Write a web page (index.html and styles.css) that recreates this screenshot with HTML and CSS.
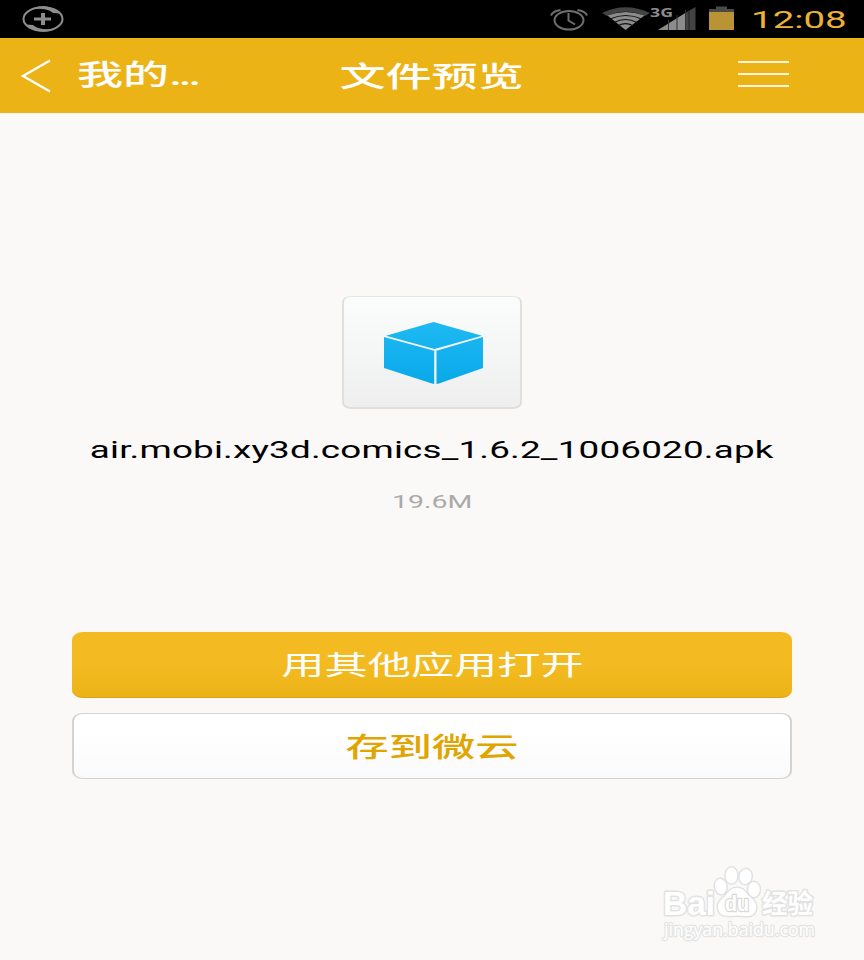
FILE: index.html
```
<!DOCTYPE html>
<html lang="zh-CN">

<head>
    <meta charset="UTF-8">
    <meta name="viewport" content="width=device-width, initial-scale=1.0">
    <title>文件预览</title>
    <link rel="stylesheet" href="styles.css">
</head>

<body>
    <div class="status-bar">
        <svg class="status-icon" width="44" height="30" viewBox="0 0 44 30" fill="none" stroke="#8d8d8d">
            <ellipse cx="22" cy="15" rx="19.5" ry="11.8" stroke-width="2" />
            <path d="M9 5.5C18 .5 31 1 39 9.5L32 9C27 4.5 17 4 9 5.5zM35 24.5C26 29.5 13 29 5 20.5L12 21C17 25.5 27 26 35 24.5z" fill="#8d8d8d" stroke="none" />
            <path d="M13 15h17" stroke-width="3" />
            <path d="M22 9v12" stroke-width="4" />
        </svg>
        <svg class="status-tray" width="190" height="38" viewBox="548 0 190 38">
            <!-- alarm -->
            <g fill="none" stroke="#6e6e6e" stroke-width="2">
                <ellipse cx="569" cy="20.3" rx="14.5" ry="9.3" />
                <path d="M568.500 13v7.500l6.500 4" />
                <path d="M551 15.500Q553 11 560.500 10M587 15.500Q585 11 577.500 10" />
            </g>
            <!-- wifi -->
            <path d="M602 13Q625.500 1.500 650 13L645 16Q625.500 7.500 607 16z" fill="#434343" />
            <path d="M607.500 15.500Q625.500 8.500 644.500 15.500L625.500 30z" fill="#8c8c8c" />
            <g fill="none" stroke="#111" stroke-width="1.1">
                <path d="M610 19Q625.500 12 642 19" />
                <path d="M614 22.500Q625.500 16.500 637 22.500" />
                <path d="M618 25.800Q625.500 21.500 633 25.800" />
            </g>
            <!-- signal -->
            <text class="network" x="650" y="17" textLength="23" lengthAdjust="spacingAndGlyphs">3G</text>
            <path d="M658 30L686 12.500V30z" fill="#8c8c8c" />
            <path d="M686 12.500L695.500 7V30H686z" fill="#434343" />
            <path d="M668.500 20v10M677 15v15M685.500 10v20" stroke="#333" stroke-width="1" />
            <path d="M689 10v20" stroke="#222" stroke-width="1" />
            <!-- battery -->
            <path d="M709 9h7V6.500h11V9h7v3h-25z" fill="#4a4a46" />
            <path d="M709 12h25v18h-25z" fill="#b89435" />
        </svg>
        <div class="clock"><span class="wide">12:08</span></div>
    </div>

    <div class="nav-bar">
        <a class="back">
            <svg width="32" height="34" viewBox="0 0 32 34" fill="none" stroke="#fff" stroke-width="2.3">
                <path d="M30 1.5L3 17L30 32.500" />
            </svg>
            <span class="wide">我的<span class="dots">...</span></span>
        </a>
        <h1 class="title"><span class="wide">文件预览</span></h1>
        <div class="menu">
            <i></i>
            <i></i>
            <i></i>
        </div>
    </div>

    <div class="content">
        <div class="file-icon">
            <svg width="102" height="64" viewBox="0 0 102 64">
                <defs>
                    <linearGradient id="box" x1="0" y1="0" x2="0" y2="64" gradientUnits="userSpaceOnUse">
                        <stop offset="0" stop-color="#1fbaf3" />
                        <stop offset="1" stop-color="#08a8e8" />
                    </linearGradient>
                </defs>
                <g fill="url(#box)">
                    <path d="M50.500 1L99 14.800L51.500 28L3 14.800z" />
                    <path d="M1 16L51.200 29.700V63L49 62.500L1 47z" />
                    <path d="M100 16L53.500 29.700V63L56 62.500L100 47z" />
                </g>
            </svg>
        </div>
        <div class="file-name"><span class="wide">air.mobi.xy3d.comics_1.6.2_1006020.apk</span></div>
        <div class="file-size"><span class="wide">19.6M</span></div>
        <button class="btn btn-primary"><span class="wide">用其他应用打开</span></button>
        <button class="btn btn-plain"><span class="wide">存到微云</span></button>
    </div>

    <svg class="watermark" width="160" height="80" viewBox="658 864 160 80">
        <g class="outline">
            <text class="brand" x="663" y="915" textLength="52" lengthAdjust="spacingAndGlyphs">Bai</text>
            <ellipse cx="720.700" cy="886.500" rx="5.800" ry="7.500" transform="rotate(-8 720.700 886.500)" />
            <ellipse cx="731.500" cy="875.500" rx="5.800" ry="8" />
            <ellipse cx="745.500" cy="876.500" rx="6" ry="7.500" transform="rotate(12 745.500 876.500)" />
            <ellipse cx="754" cy="889.500" rx="5.800" ry="7.500" />
            <path d="M737 888C730 888 728 893 724 897C719 901 717 905 718.500 910C721 918 730 915.500 737 915.500C745 915.500 752 918.500 755.500 911C757.500 905 755 901 750 897C746 893 744 888 737 888z" />
            <text class="brand-cn" x="762" y="913" textLength="51" lengthAdjust="spacingAndGlyphs">经验</text>
        </g>
        <text class="du" x="725" y="911" textLength="24" lengthAdjust="spacingAndGlyphs">du</text>
        <text class="site" x="664" y="935.500" textLength="151" lengthAdjust="spacingAndGlyphs">jingyan.baidu.com</text>
    </svg>
</body>

</html>
```
FILE: styles.css
```
* {
    box-sizing: border-box;
}

body {
    margin: 0;
    height: 960px;
    overflow: hidden;
    position: relative;
    font-family: Roboto, "Noto Sans CJK SC", sans-serif;
    background-color: #faf9f7;
    color: #000;
}

/* the screen is stretched sideways, so is its text */
.wide {
    display: inline-block;
    transform: scaleX(1.6);
    white-space: nowrap;
}

.status-bar {
    display: flex;
    align-items: center;
    height: 38px;
    padding: 0 10px 0 21px;
    background-color: #000;
}

.status-tray {
    margin-left: auto;
}

.network {
    font: bold 13px "Open Sans", sans-serif;
    fill: #8c8c8c;
}

.clock {
    width: 116px;
    padding: 2px 0 0 6px;
    text-align: center;
    font-size: 24px;
    line-height: 36px;
    color: #ebb336;
}

.nav-bar {
    display: grid;
    grid-template-columns: 288px 288px 288px;
    align-items: center;
    height: 75px;
    background-color: #ecb317;
    color: #fff;
}

.back {
    display: flex;
    align-items: center;
    gap: 25px;
    padding-left: 20px;
    font-size: 28.8px;
    font-weight: 500;
    line-height: 42px;
}

.back .wide {
    transform-origin: left;
    margin-top: -1px;
}

.dots {
    letter-spacing: -2px;
}

.title {
    margin: 0;
    padding-top: 2px;
    text-align: center;
    font-size: 28.8px;
    font-weight: 500;
    line-height: 42px;
}

.menu {
    display: flex;
    flex-direction: column;
    gap: 10px;
    width: 51px;
    margin: 0 0 3px 162px;
}

.menu i {
    height: 2px;
    background-color: #fff5dc;
}

.content {
    display: flex;
    flex-direction: column;
    align-items: center;
    padding: 183px 72px 0;
}

.file-icon {
    display: flex;
    align-items: center;
    justify-content: center;
    width: 180px;
    height: 113px;
    padding: 1px 0 0 3px;
    border: 2px solid #dfdfde;
    border-top: 1px solid #e6e6e5;
    border-radius: 9px / 6px;
    background: linear-gradient(#fbfdfd, #eeeeee);
}

.file-name {
    margin-top: 25px;
    font-size: 23px;
    letter-spacing: 0.12px;
    line-height: 34px;
}

.file-size {
    margin-top: 20px;
    font-size: 17.8px;
    line-height: 28px;
    color: #aaa;
}

.btn {
    width: 720px;
    height: 66px;
    padding: 3px 0 0;
    border-radius: 11px / 8px;
    font-family: inherit;
    font-size: 27px;
    line-height: 40px;
}

.btn-primary {
    margin-top: 116px;
    border: 0;
    border-bottom: 1px solid #dca20f;
    background: linear-gradient(#f3bb21 50%, #ecb317);
    color: #fff;
}

.btn-plain {
    margin-top: 15px;
    border: 1px solid #d3d3d3;
    border-width: 1px 2px;
    background: linear-gradient(#fff 30%, #fafafa);
    color: #e0a500;
    font-weight: 500;
}

.watermark {
    position: absolute;
    left: 658px;
    top: 864px;
}

.outline {
    fill: #fff;
    stroke: #e2e2e2;
    stroke-width: 3px;
    stroke-linejoin: round;
    paint-order: stroke;
}

.brand {
    font: bold 34px "Liberation Sans", sans-serif;
}

.brand-cn {
    font: bold 26px "Noto Sans CJK SC", sans-serif;
}

.du {
    font: bold 22px "Liberation Sans", sans-serif;
    fill: #fff;
    stroke: #d8d8d8;
    stroke-width: 2.5px;
    paint-order: stroke;
}

.site {
    font: 18px "Open Sans", sans-serif;
    fill: #fff;
    stroke: #e4e4e4;
    stroke-width: 2.5px;
    stroke-linejoin: round;
    paint-order: stroke;
}
```
